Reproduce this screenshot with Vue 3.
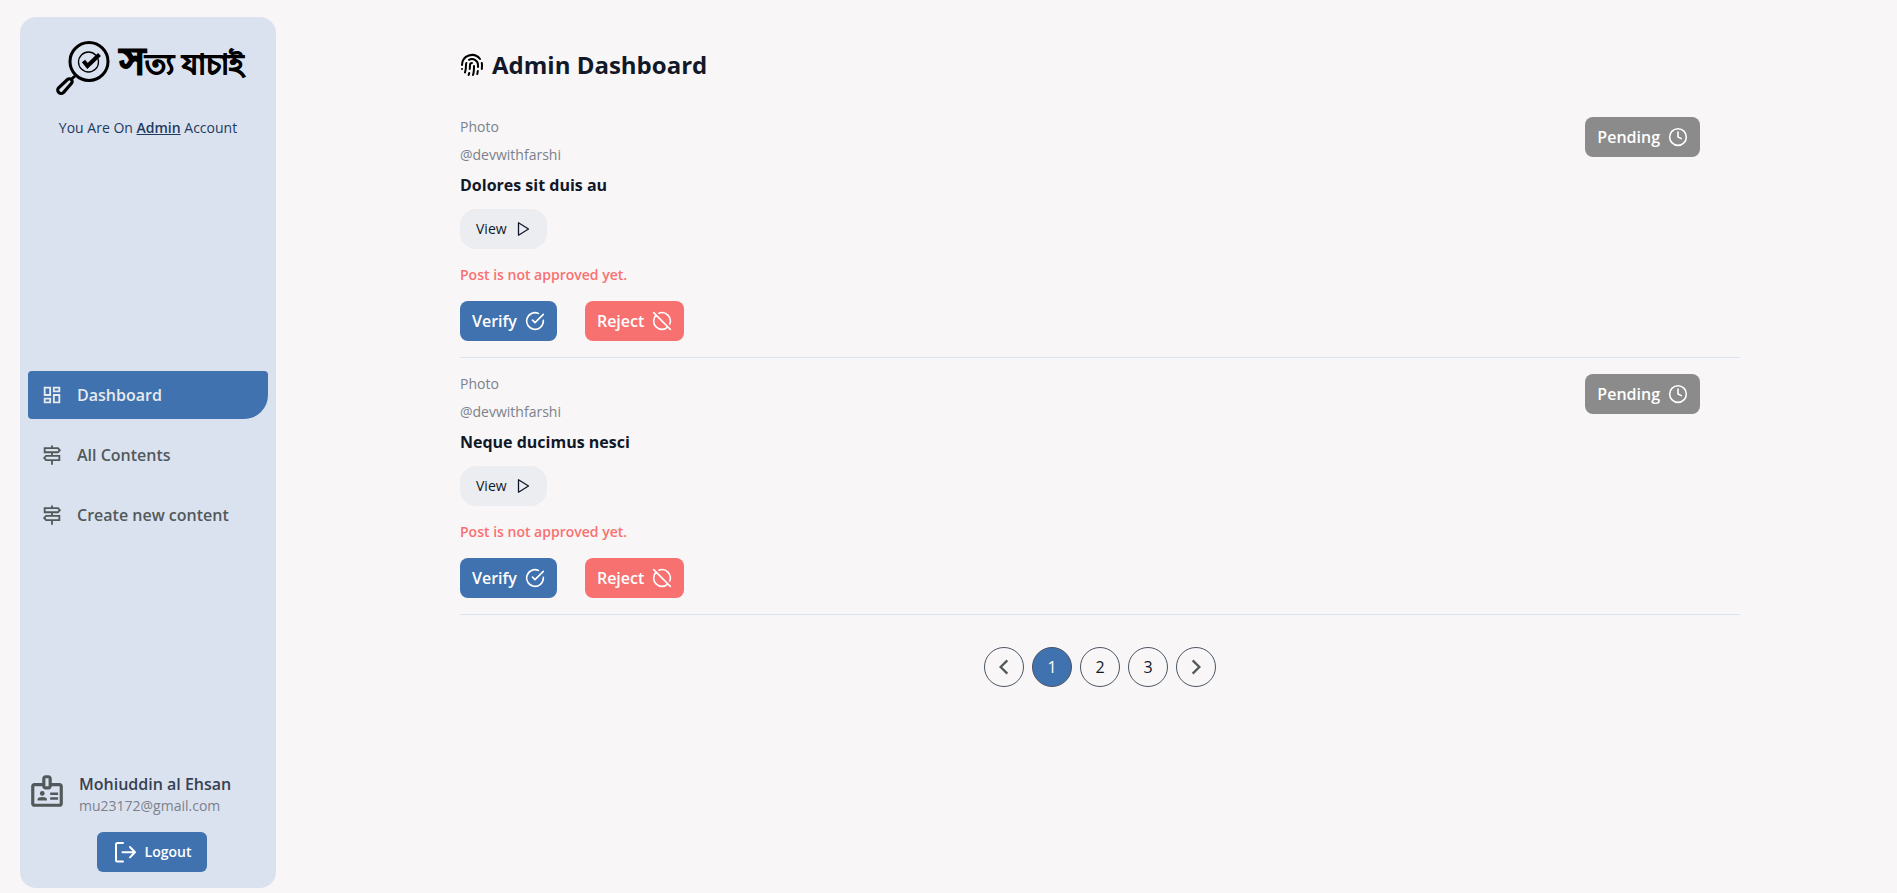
<script setup>
const nav = [
  { label: 'Dashboard', icon: 'grid', active: true },
  { label: 'All Contents', icon: 'sign', active: false },
  { label: 'Create new content', icon: 'sign', active: false },
]
const posts = [
  { id: 1, type: 'Photo', author: '@devwithfarshi', title: 'Dolores sit duis au' },
  { id: 2, type: 'Photo', author: '@devwithfarshi', title: 'Neque ducimus nesci' },
]
const pages = [1, 2, 3]
const current = 1
</script>

<template>
  <div class="layout">
    <aside class="sidebar">
      <div class="brand">
        <a href="#" class="logo">
          <svg class="lens" viewBox="0 0 54 54" fill="none" stroke="#000">
            <circle cx="33" cy="20.500" r="19" stroke-width="3" />
            <circle cx="32.500" cy="21" r="10" stroke-width="1.300" />
            <path d="M27.500 20l4 5L43.500 13.500" stroke-width="4.200" />
            <path d="M11.500 38.500L2.600 46.800a3.400 3.400 0 0 0 4.800 4.800L15.300 42.500a2.700 2.700 0 0 0-3.800-4z" stroke-width="3.200" stroke-linejoin="round" />
            <path d="M14.500 39l4.500-4" stroke-width="3" />
          </svg>
          <span class="wordmark"><span class="lead">স</span>ত্য যাচাই</span>
        </a>
        <p class="account">You Are On <strong>Admin</strong> Account</p>
      </div>

      <nav class="nav">
        <a v-for="n in nav" :key="n.label" href="#" class="nav-link" :class="{ active: n.active }">
          <svg v-if="n.icon === 'grid'" class="nav-icon" viewBox="0 0 24 24" fill="currentColor">
            <path d="M19 5v2h-4V5h4M9 5v6H5V5h4m10 8v6h-4v-6h4M9 17v2H5v-2h4M21 3h-8v6h8V3zM11 3H3v10h8V3zm10 8h-8v10h8V11zm-10 4H3v6h8v-6z" />
          </svg>
          <svg v-else class="nav-icon" viewBox="0 0 24 24" fill="none" stroke="currentColor" stroke-width="2">
            <path d="M12 1.500v3M12 9v4M12 18v4.500M4 4.500h14.500l2 2.200-2 2.300H4zM20 13H5.500l-2 2.200 2 2.300H20z" />
          </svg>
          <span>{{ n.label }}</span>
        </a>
      </nav>

      <div class="profile">
        <div class="user">
          <svg class="badge" viewBox="0 0 24 24" fill="currentColor">
            <path d="M14 13h5v1.500h-5zM14 16h5v1.500h-5zM20 7h-5V4c0-1.100-.9-2-2-2h-2c-1.100 0-2 .9-2 2v3H4c-1.100 0-2 .9-2 2v11c0 1.100.9 2 2 2h16c1.100 0 2-.9 2-2V9c0-1.100-.9-2-2-2zM11 4h2v5h-2V4zm9 16H4V9h5c0 1.100.9 2 2 2h2c1.100 0 2-.9 2-2h5v11z" />
            <circle cx="9" cy="13.500" r="1.500" />
            <path d="M11.080 16.180C10.440 15.900 9.740 15.750 9 15.750s-1.440.15-2.080.43c-.56.24-.92.780-.92 1.390V18h6v-.430c0-.610-.360-1.150-.920-1.390z" />
          </svg>
          <div>
            <p class="user-name">Mohiuddin al Ehsan</p>
            <p class="user-mail">mu23172@gmail.com</p>
          </div>
        </div>
        <button type="button" class="logout">
          <svg class="logout-icon" viewBox="0 0 24 24" fill="none" stroke="currentColor" stroke-width="2" stroke-linecap="round" stroke-linejoin="round">
            <path d="M10 3H4.500a1.500 1.500 0 0 0-1.500 1.500v15.500a1.500 1.500 0 0 0 1.500 1.500H10M9.500 12.200H22M17 7l5 5.200-5 5.200" />
          </svg>
          <span>Logout</span>
        </button>
      </div>
    </aside>

    <main class="main">
      <div class="container">
        <h1 class="heading">
          <svg class="finger" viewBox="0 0 24 24" fill="none" stroke="currentColor" stroke-width="2" stroke-linecap="round">
            <path d="M12 10a2 2 0 0 0-2 2c0 1.020-.1 2.510-.26 4M14 13.120c0 2.380 0 6.380-1 8.880M17.290 21.020c.12-.6.430-2.300.5-3.020M2 12a10 10 0 0 1 18-6M2 16h.01M21.800 16c.2-2 .131-5.354 0-6M5 19.500C5.500 18 6 15 6 12a6 6 0 0 1 .340-2M8.650 22c.210-.660.450-1.320.570-2M9 6.800a6 6 0 0 1 9 5.200v2" />
          </svg>
          Admin Dashboard
        </h1>

        <article v-for="p in posts" :key="p.id" class="post">
          <div class="details">
            <p class="meta">{{ p.type }}</p>
            <p class="meta">{{ p.author }}</p>
            <h2 class="title">{{ p.title }}</h2>
            <button type="button" class="view">
              View
              <svg class="view-icon" viewBox="0 0 16 16" fill="none" stroke="currentColor" stroke-width="1.300" stroke-linejoin="round">
                <path d="M3.500 1.800v12.400L13.500 8z" />
              </svg>
            </button>
            <p class="notice">Post is not approved yet.</p>
            <div class="actions">
              <button type="button" class="btn verify">
                Verify
                <svg class="btn-icon" viewBox="0 0 24 24" fill="none" stroke="currentColor" stroke-width="1.900" stroke-linecap="round" stroke-linejoin="round">
                  <path d="M22 11.080V12a10 10 0 1 1-5.930-9.140M22 4L12 14.010l-3-3" />
                </svg>
              </button>
              <button type="button" class="btn reject">
                Reject
                <svg class="btn-icon" viewBox="0 0 24 24" fill="none" stroke="currentColor" stroke-width="1.900" stroke-linecap="round">
                  <path d="M2 2l20 20M8.350 2.690A10 10 0 0 1 21.300 15.650M19.080 19.080A10 10 0 1 1 4.920 4.920" />
                </svg>
              </button>
            </div>
          </div>
          <button type="button" class="btn pending">
            Pending
            <svg class="btn-icon" viewBox="0 0 24 24" fill="none" stroke="currentColor" stroke-width="1.900" stroke-linecap="round" stroke-linejoin="round">
              <circle cx="12" cy="12" r="10" />
              <path d="M12 6v6l4 2" />
            </svg>
          </button>
        </article>

        <nav class="pager" aria-label="Pagination">
          <button type="button" class="page" aria-label="Previous">
            <svg class="chevron" viewBox="0 0 24 24" fill="none" stroke="currentColor" stroke-width="2.800"><path d="M16 4L8 12l8 8" /></svg>
          </button>
          <button v-for="n in pages" :key="n" type="button" class="page" :class="{ current: n === current }">{{ n }}</button>
          <button type="button" class="page" aria-label="Next">
            <svg class="chevron" viewBox="0 0 24 24" fill="none" stroke="currentColor" stroke-width="2.800"><path d="M8 4l8 8-8 8" /></svg>
          </button>
        </nav>
      </div>
    </main>
  </div>
</template>

<style>
body {
  background: #f8f6f7;
}
</style>

<style scoped>
.layout {
  display: flex;
  min-height: 100vh;
  box-sizing: border-box;
  padding: 17px 0 5px 20px;
  font-family: "Open Sans", "Noto Sans", sans-serif;
  color: #111827;
}
p, h1, h2 { margin: 0; }
a { color: inherit; text-decoration: none; }
button { font: inherit; border: 0; cursor: pointer; }
svg { flex: none; display: block; }

.sidebar {
  flex: none;
  width: 256px;
  box-sizing: border-box;
  padding: 24px 8px 16px;
  border-radius: 16px;
  background: #dbe2ef;
  display: flex;
  flex-direction: column;
  justify-content: space-between;
}
.brand { display: flex; flex-direction: column; align-items: center; gap: 23px; }
.logo { display: flex; gap: 10px; color: #000; padding-left: 4px; height: 54px; }
.lens { width: 54px; height: 54px; }
.wordmark {
  font-size: 28px;
  font-weight: 800;
  line-height: 36px;
  white-space: nowrap;
  -webkit-text-stroke: 1px #000;
}
.lead { font-size: 38px; -webkit-text-stroke: 2px #000; }
.account { font-size: 14px; line-height: 20px; color: #1e3a5f; }
.account strong { font-weight: 600; text-decoration: underline; }

.nav { display: flex; flex-direction: column; gap: 12px; }
.nav-link {
  height: 48px;
  display: flex;
  align-items: center;
  gap: 14px;
  padding: 0 13px;
  border-radius: 4px;
  font-size: 16px;
  font-weight: 600;
  color: #52595a;
}
.nav-link.active {
  background: #3f72af;
  color: #e8eaed;
  border-radius: 4px 4px 24px 4px;
}
.nav-icon { width: 22px; height: 22px; }

.profile { display: flex; flex-direction: column; align-items: center; gap: 16px; }
.user { align-self: stretch; display: flex; gap: 13px; }
.badge { width: 38px; height: 38px; color: #52595a; }
.user-name { font-size: 16px; line-height: 24px; font-weight: 600; color: #374151; }
.user-mail { font-size: 14px; line-height: 20px; color: #7b818c; }
.logout {
  height: 40px;
  display: flex;
  align-items: center;
  gap: 8px;
  margin-left: 8px;
  padding: 0 16px;
  border-radius: 6px;
  background: #3f72af;
  color: #fff;
  font-size: 14px;
  line-height: 20px;
  font-weight: 600;
}
.logout-icon { width: 24px; height: 24px; }

.main { flex: 1; min-width: 0; padding-left: 27px; }
.container { max-width: 1280px; margin: 0 auto; }
.heading {
  display: flex;
  align-items: center;
  gap: 8px;
  height: 32px;
  padding: 32px 0 20px;
  font-size: 24px;
  line-height: 32px;
  font-weight: 700;
}
.finger { width: 24px; height: 24px; color: #000; }

.post {
  display: flex;
  justify-content: space-between;
  align-items: flex-start;
  padding: 16px 40px 16px 0;
  border-bottom: 1px solid #dbe2ef;
}
.details { display: flex; flex-direction: column; align-items: flex-start; }
.meta { font-size: 14px; line-height: 20px; margin-bottom: 8px; color: #7b818c; }
.title { font-size: 16px; line-height: 24px; font-weight: 700; margin-bottom: 12px; }
.view {
  height: 40px;
  display: flex;
  align-items: center;
  gap: 8px;
  padding: 0 16px;
  border-radius: 16px;
  background: #ebedf0;
  color: #111827;
  font-size: 14px;
  line-height: 20px;
}
.view-icon { width: 16px; height: 16px; }
.notice { font-size: 14px; line-height: 20px; font-weight: 600; color: #f87171; margin: 16px 0; }
.actions { display: flex; gap: 28px; }
.btn {
  height: 40px;
  display: flex;
  align-items: center;
  gap: 8px;
  padding: 0 12px;
  border-radius: 8px;
  color: #fff;
  font-size: 16px;
  font-weight: 600;
}
.btn-icon { width: 20px; height: 20px; }
.verify { background: #3f72af; }
.reject { background: #f87171; }
.pending { background: #8b8b8b; }

.pager { display: flex; justify-content: center; gap: 8px; margin-top: 32px; }
.page {
  width: 40px;
  height: 40px;
  display: flex;
  align-items: center;
  justify-content: center;
  padding: 0;
  border: 1px solid #4b5563;
  border-radius: 50%;
  background: transparent;
  color: #111827;
  font-size: 16px;
}
.page.current { background: #3f72af; color: #fff; }
.chevron { width: 20px; height: 20px; color: #52595a; }
</style>
